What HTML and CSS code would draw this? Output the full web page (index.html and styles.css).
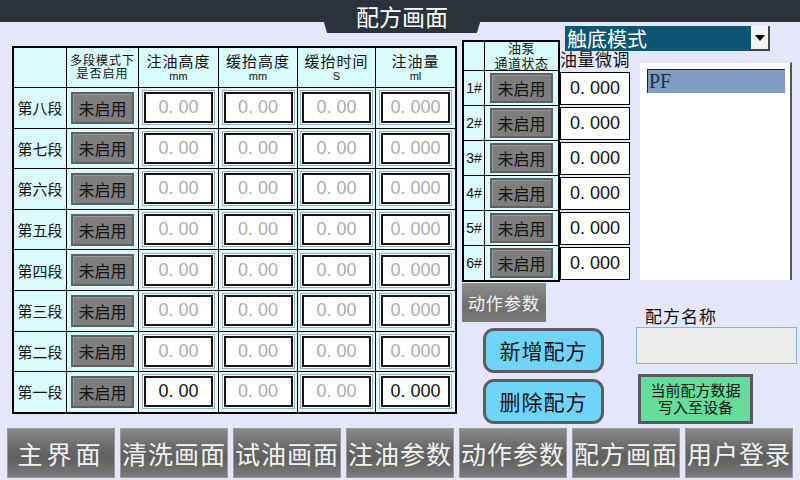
FILE: index.html
```html
<!DOCTYPE html>
<html lang="zh-CN">
<head>
<meta charset="utf-8">
<title>配方画面</title>
<link rel="stylesheet" href="styles.css">
</head>
<body>
<header class="topbar"><div class="title">配方画面</div></header>
<div class="main">
  <div class="grid">
    <div class="c"></div>
    <div class="c hd-small"><span>多段模式下</span><span>是否启用</span></div>
    <div class="c hd"><span>注油高度</span><small>mm</small></div>
    <div class="c hd"><span>缓抬高度</span><small>mm</small></div>
    <div class="c hd"><span>缓抬时间</span><small>S</small></div>
    <div class="c hd"><span>注油量</span><small>ml</small></div>

    <div class="c lbl">第八段</div><div class="c"><div class="btn-off">未启用</div></div><div class="c"><div class="inp">0. 00</div></div><div class="c"><div class="inp">0. 00</div></div><div class="c"><div class="inp">0. 00</div></div><div class="c"><div class="inp">0. 000</div></div>
    <div class="c lbl">第七段</div><div class="c"><div class="btn-off">未启用</div></div><div class="c"><div class="inp">0. 00</div></div><div class="c"><div class="inp">0. 00</div></div><div class="c"><div class="inp">0. 00</div></div><div class="c"><div class="inp">0. 000</div></div>
    <div class="c lbl">第六段</div><div class="c"><div class="btn-off">未启用</div></div><div class="c"><div class="inp">0. 00</div></div><div class="c"><div class="inp">0. 00</div></div><div class="c"><div class="inp">0. 00</div></div><div class="c"><div class="inp">0. 000</div></div>
    <div class="c lbl">第五段</div><div class="c"><div class="btn-off">未启用</div></div><div class="c"><div class="inp">0. 00</div></div><div class="c"><div class="inp">0. 00</div></div><div class="c"><div class="inp">0. 00</div></div><div class="c"><div class="inp">0. 000</div></div>
    <div class="c lbl">第四段</div><div class="c"><div class="btn-off">未启用</div></div><div class="c"><div class="inp">0. 00</div></div><div class="c"><div class="inp">0. 00</div></div><div class="c"><div class="inp">0. 00</div></div><div class="c"><div class="inp">0. 000</div></div>
    <div class="c lbl">第三段</div><div class="c"><div class="btn-off">未启用</div></div><div class="c"><div class="inp">0. 00</div></div><div class="c"><div class="inp">0. 00</div></div><div class="c"><div class="inp">0. 00</div></div><div class="c"><div class="inp">0. 000</div></div>
    <div class="c lbl">第二段</div><div class="c"><div class="btn-off">未启用</div></div><div class="c"><div class="inp">0. 00</div></div><div class="c"><div class="inp">0. 00</div></div><div class="c"><div class="inp">0. 00</div></div><div class="c"><div class="inp">0. 000</div></div>
    <div class="c lbl">第一段</div><div class="c"><div class="btn-off">未启用</div></div><div class="c"><div class="inp on">0. 00</div></div><div class="c"><div class="inp">0. 00</div></div><div class="c"><div class="inp">0. 00</div></div><div class="c"><div class="inp on">0. 000</div></div>
  </div>

  <div class="side">
    <div class="side-top">
      <div class="pump">
        <div class="pc"></div>
        <div class="pc phd"><span>油泵</span><span>通道状态</span></div>
        <div class="pc pn">1#</div><div class="pc"><div class="btn-off pb">未启用</div></div>
        <div class="pc pn">2#</div><div class="pc"><div class="btn-off pb">未启用</div></div>
        <div class="pc pn">3#</div><div class="pc"><div class="btn-off pb">未启用</div></div>
        <div class="pc pn">4#</div><div class="pc"><div class="btn-off pb">未启用</div></div>
        <div class="pc pn">5#</div><div class="pc"><div class="btn-off pb">未启用</div></div>
        <div class="pc pn">6#</div><div class="pc"><div class="btn-off pb">未启用</div></div>
      </div>
      <div class="rblock">
        <div class="select">
          <span class="sel-text">触底模式</span>
          <span class="sel-btn"><svg width="10" height="6" viewBox="0 0 10 6"><polygon points="0,0 10,0 5,6" fill="#000"/></svg></span>
        </div>
        <div class="rrow">
          <div class="ftcol">
            <div class="ft-lbl">油量微调</div>
            <div class="ft">0. 000</div>
            <div class="ft">0. 000</div>
            <div class="ft">0. 000</div>
            <div class="ft">0. 000</div>
            <div class="ft">0. 000</div>
            <div class="ft">0. 000</div>
          </div>
          <div class="list"><div class="item">PF</div></div>
        </div>
      </div>
    </div>
    <div class="side-bot">
      <div class="bleft">
        <div class="act-btn">动作参数</div>
        <div class="blue-btn">新增配方</div>
        <div class="blue-btn">删除配方</div>
      </div>
      <div class="bright">
        <div class="name-lbl">配方名称</div>
        <div class="name-inp"></div>
        <div class="green-btn"><span>当前配方数据</span><span>写入至设备</span></div>
      </div>
    </div>
  </div>
</div>
<nav class="nav">
  <div class="nb wide">主界面</div>
  <div class="nb">清洗画面</div>
  <div class="nb">试油画面</div>
  <div class="nb">注油参数</div>
  <div class="nb">动作参数</div>
  <div class="nb">配方画面</div>
  <div class="nb">用户登录</div>
</nav>
</body>
</html>
```
FILE: styles.css
```css
* { box-sizing: border-box; margin: 0; padding: 0; }
html, body { width: 800px; height: 480px; overflow: hidden; }
body {
  background: #e6e6fa;
  font-family: "Noto Sans CJK SC", "Noto Sans", sans-serif;
  color: #111;
}

.topbar { height: 22px; background: #2b323c; display: flex; justify-content: center; }
.title {
  width: 170px; height: 33px; margin-left: 4px;
  background: #2b323c;
  clip-path: polygon(0 0, 100% 0, 94% 100%, 6% 100%);
  color: #fff; font-size: 23px; line-height: 33px; text-align: center;
  position: relative; z-index: 3;
}

.main { display: flex; height: 404px; padding-left: 12px; }

.grid {
  margin-top: 24px; width: 445px; height: 368px;
  display: grid;
  grid-template-columns: 52px 71px 79px 78px 77px 79px;
  grid-template-rows: 39px repeat(8, 39.6px);
  gap: 1px; background: #000; border: 2px solid #000;
}
.c { background: #d9fbfb; display: flex; align-items: center; justify-content: center; }
.hd {
  flex-direction: column; letter-spacing: 1px;
  font-family: "Liberation Sans", "Noto Sans CJK SC", sans-serif;
  font-size: 15px; line-height: 17px;
}
.hd small { font-size: 11px; line-height: 13px; letter-spacing: 0; }
.hd-small {
  flex-direction: column; text-align: center; letter-spacing: 1px; padding-top: 1px;
  font-family: "Liberation Sans", "Noto Sans CJK SC", sans-serif;
  font-size: 12px; line-height: 13.5px;
}
.lbl { font-size: 15px; }

.btn-off {
  width: 63px; height: 32px;
  background: #7e7e7e;
  border: 2px solid #5f5f5f;
  box-shadow: inset 1px 1px 0 #9a9a9a;
  font-size: 16px; line-height: 28px; text-align: center; color: #111;
}
.inp {
  width: 73px; height: 35px; background: #fff;
  border: 1px solid #a8a8a8;
  box-shadow: inset 0 0 0 1px #fff, inset 0 0 0 3px #151515;
  font-family: "Liberation Sans", sans-serif; font-size: 18px; line-height: 33px;
  text-align: center; color: #acacac;
}
.inp.on { color: #111; }

.side { margin-left: 5px; width: 338px; display: flex; flex-direction: column; }
.side-top { display: flex; height: 261px; }
.pump {
  position: relative; z-index: 2;
  margin-top: 18px; width: 98px; height: 242px;
  display: grid; grid-template-columns: 20px 73px; grid-template-rows: 28px repeat(6, 34px);
  gap: 1px; background: #000; border: 2px solid #000;
}
.pc { background: #d9fbfb; display: flex; align-items: center; justify-content: center; }
.phd {
  flex-direction: column; justify-content: flex-start; text-align: center; letter-spacing: 0.5px;
  font-family: "Liberation Sans", "Noto Sans CJK SC", sans-serif;
  font-size: 13px; line-height: 14.5px; padding-top: 0;
}
.pn { font-family: "Liberation Sans", sans-serif; font-size: 14px; }
.pb { width: 63px; height: 30px; line-height: 26px; }

.rblock { width: 240px; display: flex; flex-direction: column; }
.select {
  margin: 4px 0 0 5px; width: 205px; height: 25px;
  background: #0c5573; display: flex; justify-content: space-between;
  color: #fff; font-size: 20px; line-height: 25px;
}
.sel-text { padding-left: 2px; }
.sel-btn {
  width: 19px; height: 25px; background: #f2f2f2;
  border-right: 2px solid #444; border-bottom: 2px solid #444;
  display: flex; align-items: center; justify-content: center;
}
.rrow { display: flex; }
.ftcol { width: 70px; display: flex; flex-direction: column; }
.ft-lbl {
  height: 19px; white-space: nowrap; letter-spacing: 0.5px;
  font-family: "Liberation Sans", "Noto Sans CJK SC", sans-serif;
  font-size: 17px; line-height: 19px;
}
.ft {
  width: 70px; height: 33px; margin-top: 2px; background: #fff; border: 1px solid #000;
  font-family: "Liberation Sans", sans-serif; font-size: 18px; line-height: 31px; text-align: center;
}
.list {
  margin: 11px 0 0 10px; width: 152px; height: 218px;
  background: #fff; border-right: 2px solid #555; border-top: 1px solid #e4e4ee;
  padding: 6px 0 0 7px;
}
.item {
  width: 138px; height: 24px; background: #7e9bc0;
  border-top: 1px solid #222; border-left: 1px solid #222;
  font-family: "Liberation Serif", serif; font-size: 20px; line-height: 23px;
  color: #1f2d4d; padding-left: 1px;
}

.side-bot { display: flex; height: 143px; }
.bleft { width: 174px; display: flex; flex-direction: column; }
.act-btn {
  width: 84px; height: 39px;
  background: linear-gradient(180deg, #8d8d8d 0%, #6f6f6f 60%, #7d7d7d 100%);
  color: #f4f4f4; font-size: 17px; line-height: 39px; text-align: center; letter-spacing: 1px;
}
.blue-btn {
  margin: 6px 0 0 21px; width: 121px; height: 45px;
  background: #6fd4f8; border: 3px solid #5a5e62; border-radius: 11px;
  font-size: 21px; line-height: 39px; text-align: center; color: #111; letter-spacing: 1px;
}
.bright { width: 164px; display: flex; flex-direction: column; }
.name-lbl { margin: 23px 0 0 9px; font-size: 17px; line-height: 19px; letter-spacing: 1px; }
.name-inp { margin-top: 2px; width: 161px; height: 37px; background: #ececec; border: 1px solid #8eb0d2; }
.green-btn {
  margin: 10px 0 0 2px; width: 115px; height: 50px;
  background: #66dc9a; border: 3px solid #555a5e;
  font-family: "Liberation Sans", "Noto Sans CJK SC", sans-serif;
  font-size: 15px; line-height: 17.5px; text-align: center; color: #111;
  display: flex; flex-direction: column; align-items: center; justify-content: center;
}

.nav { display: flex; gap: 5px; padding-left: 7px; margin-top: 2px; }
.nb {
  width: 108px; height: 50px;
  background: linear-gradient(180deg, #8a8a8a 0%, #6c6c6c 35%, #5f5f5f 60%, #7a7a7a 100%);
  border: 1px solid #9a9a9a;
  color: #f2f2f2; font-size: 25px; line-height: 48px; text-align: center; letter-spacing: 1px;
  white-space: nowrap;
}
.nb.wide { letter-spacing: 4px; }
```
